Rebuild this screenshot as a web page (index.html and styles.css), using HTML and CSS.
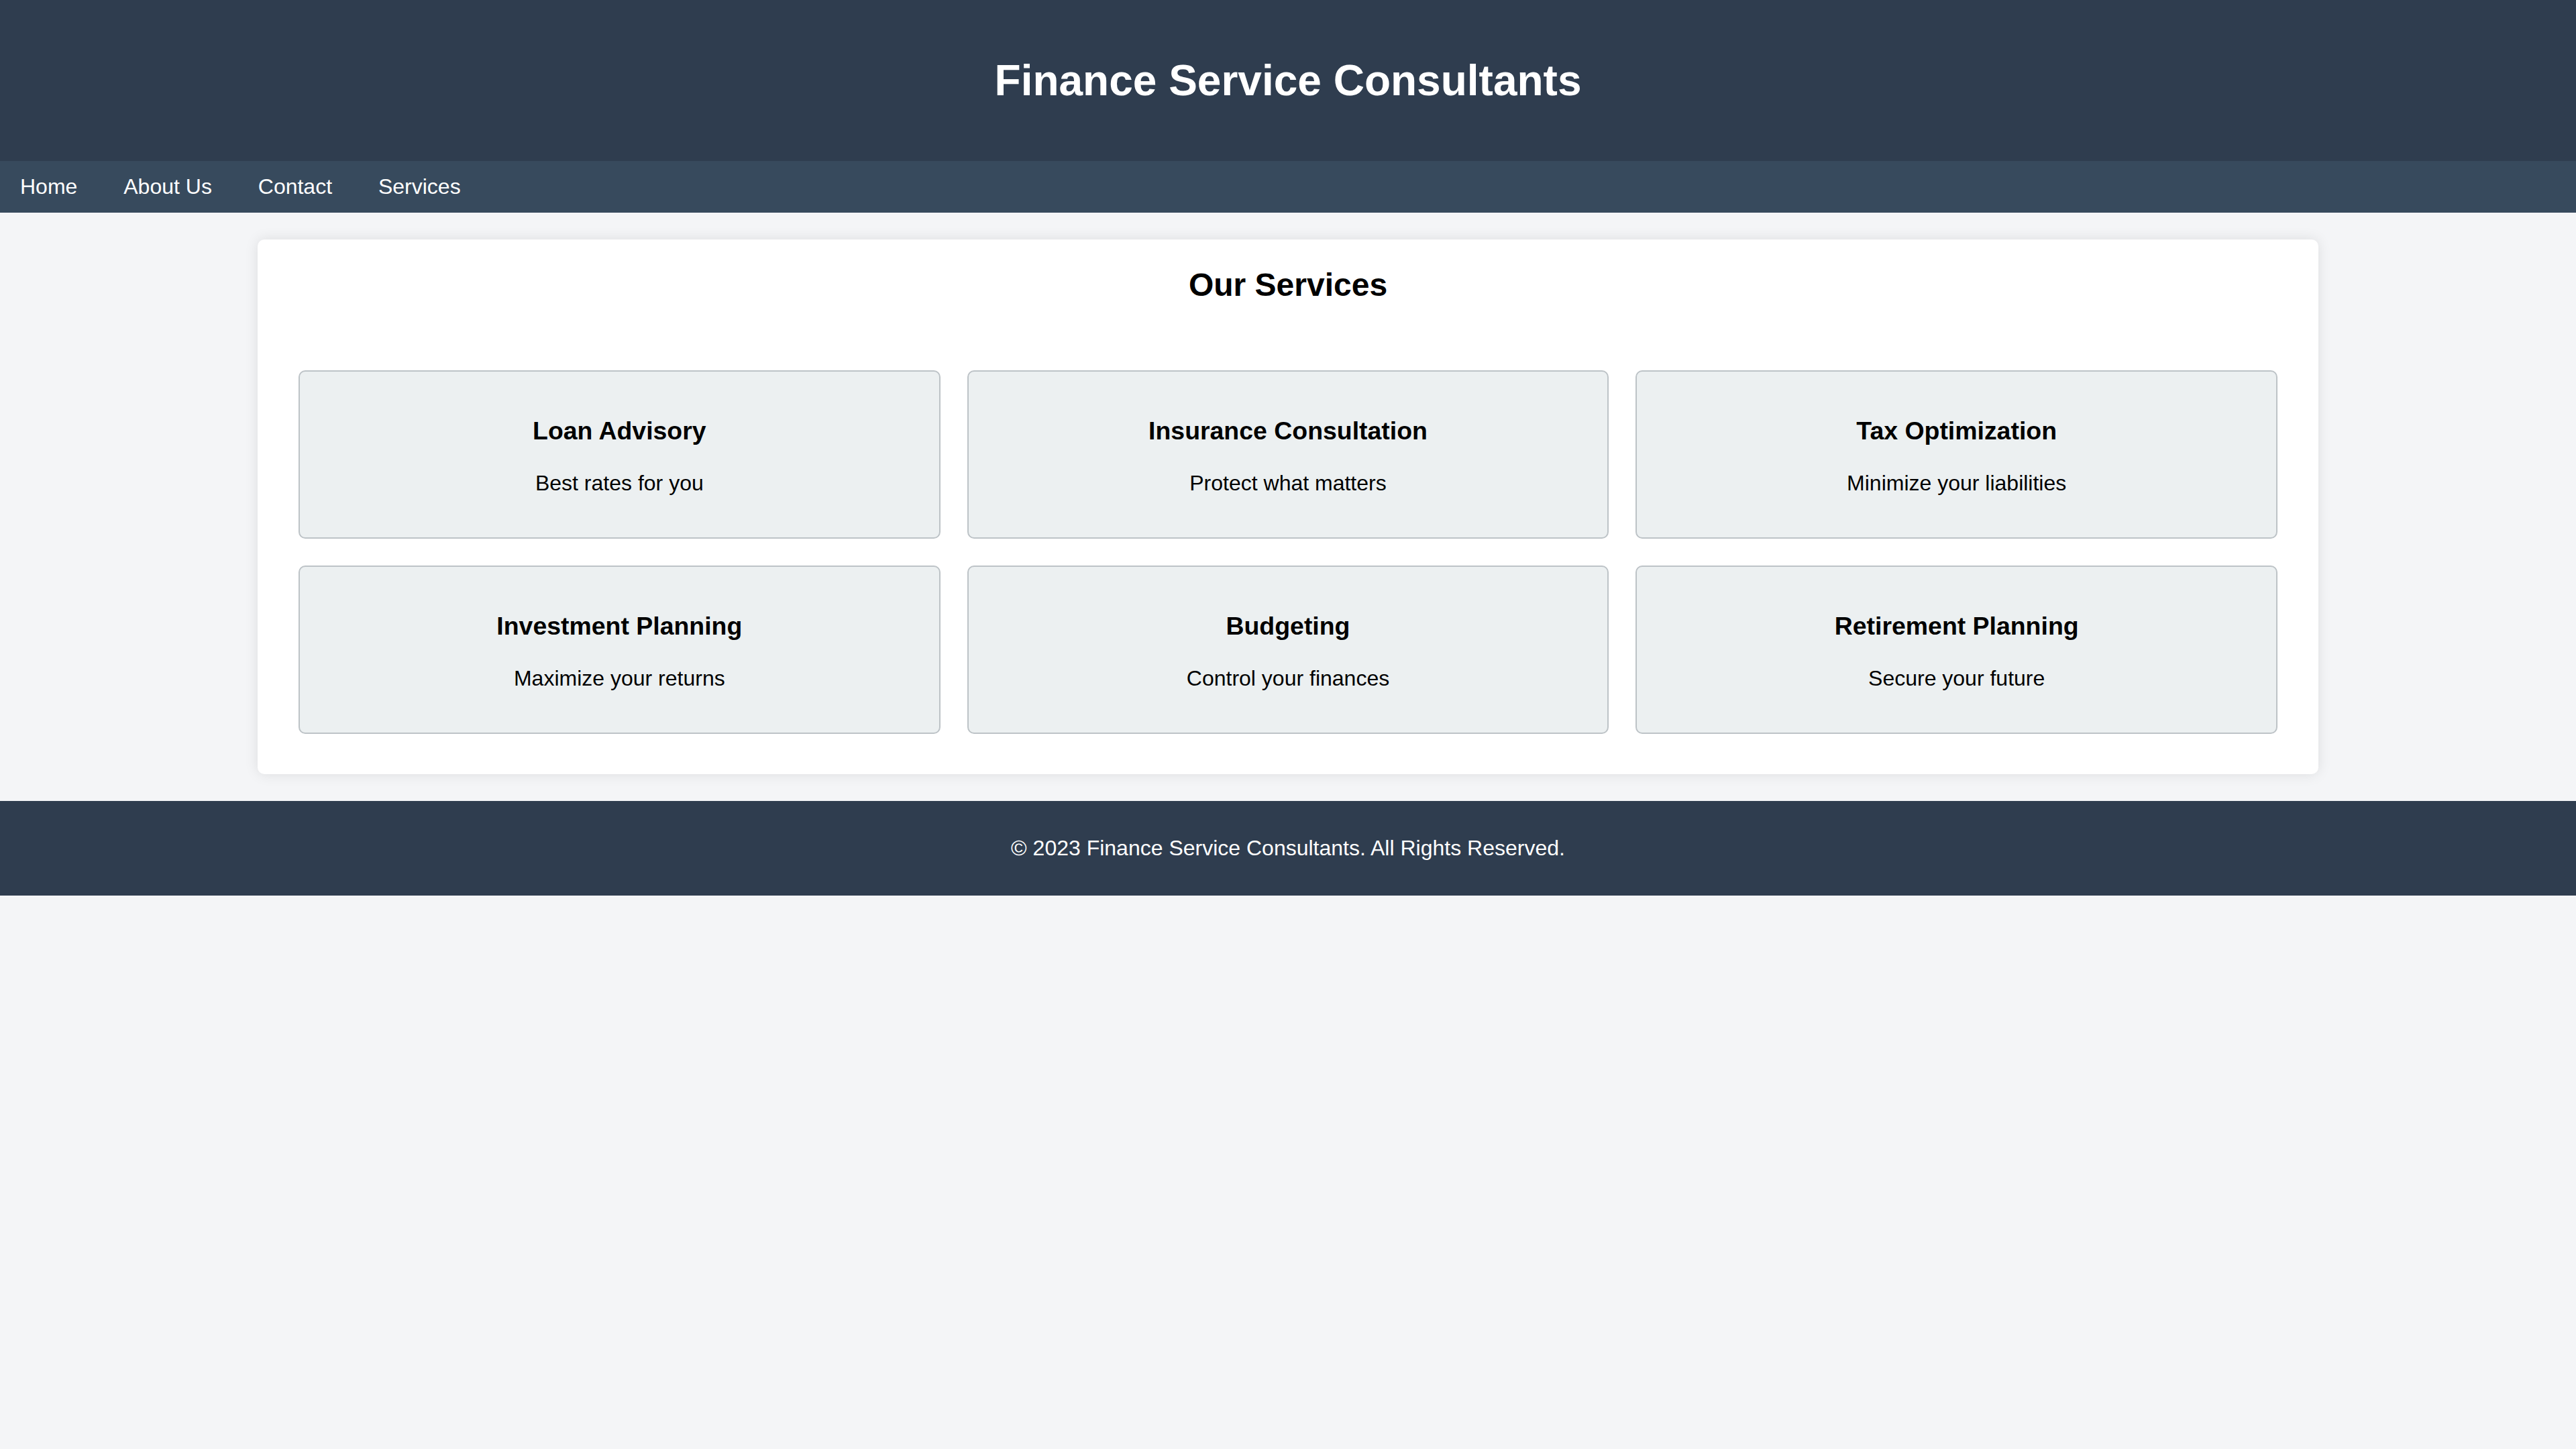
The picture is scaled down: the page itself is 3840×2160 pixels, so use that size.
FILE: index.html
```html
<!DOCTYPE html>
<html lang="en">
<head>
<meta charset="utf-8">
<title>Finance Service Consultants</title>
<link rel="stylesheet" href="styles.css">
</head>
<body>
<header class="site-header">
  <h1 class="site-title">Finance Service Consultants</h1>
</header>
<nav class="site-nav">
  <a href="#" class="nav-link">Home</a>
  <a href="#" class="nav-link">About Us</a>
  <a href="#" class="nav-link">Contact</a>
  <a href="#" class="nav-link">Services</a>
</nav>
<main class="services">
  <h2 class="services-title">Our Services</h2>
  <div class="service-grid">
    <div class="service-card">
      <h3 class="service-name">Loan Advisory</h3>
      <p class="service-desc">Best rates for you</p>
    </div>
    <div class="service-card">
      <h3 class="service-name">Insurance Consultation</h3>
      <p class="service-desc">Protect what matters</p>
    </div>
    <div class="service-card">
      <h3 class="service-name">Tax Optimization</h3>
      <p class="service-desc">Minimize your liabilities</p>
    </div>
    <div class="service-card">
      <h3 class="service-name">Investment Planning</h3>
      <p class="service-desc">Maximize your returns</p>
    </div>
    <div class="service-card">
      <h3 class="service-name">Budgeting</h3>
      <p class="service-desc">Control your finances</p>
    </div>
    <div class="service-card">
      <h3 class="service-name">Retirement Planning</h3>
      <p class="service-desc">Secure your future</p>
    </div>
  </div>
</main>
<footer class="site-footer">
  <p class="footer-text">&copy; 2023 Finance Service Consultants. All Rights Reserved.</p>
</footer>
</body>
</html>
```

FILE: styles.css
```css
html, body {
  margin: 0;
  padding: 0;
}

body {
  background: #f4f5f7;
  font-family: "Liberation Sans", Arial, Helvetica, sans-serif;
  font-size: 32px;
  color: #000;
}

.site-header {
  background: #2f3d4f;
  color: #fff;
  text-align: center;
  padding: 40px 0;
}

.site-title {
  margin: 42.88px 0;
  font-size: 64px;
  font-weight: bold;
  line-height: normal;
}

.site-nav {
  background: #374a5d;
  padding: 20px 0;
  line-height: normal;
}

.nav-link {
  color: #fff;
  text-decoration: none;
  padding: 0 30px;
}

.services {
  width: 3072px;
  box-sizing: border-box;
  margin: 40px auto;
  padding: 40px 61px 60px 61px;
  background: #fff;
  border-radius: 10px;
  box-shadow: 0 0 20px rgba(0, 0, 0, 0.1);
}

.services-title {
  margin: 0 0 100px;
  font-size: 48px;
  text-align: center;
  line-height: normal;
}

.service-grid {
  display: grid;
  grid-template-columns: repeat(3, 1fr);
  gap: 40px;
}

.service-card {
  background: #ecf0f1;
  border: 2px solid #bdc3c7;
  border-radius: 10px;
  padding: 30px;
  text-align: center;
}

.service-name {
  margin: 37.44px 0;
  font-size: 37.44px;
  line-height: normal;
}

.service-desc {
  margin: 32px 0;
  line-height: normal;
}

.site-footer {
  background: #2f3d4f;
  color: #fff;
  text-align: center;
  padding: 20px 0;
}

.footer-text {
  margin: 32px 0;
  line-height: normal;
}
```
